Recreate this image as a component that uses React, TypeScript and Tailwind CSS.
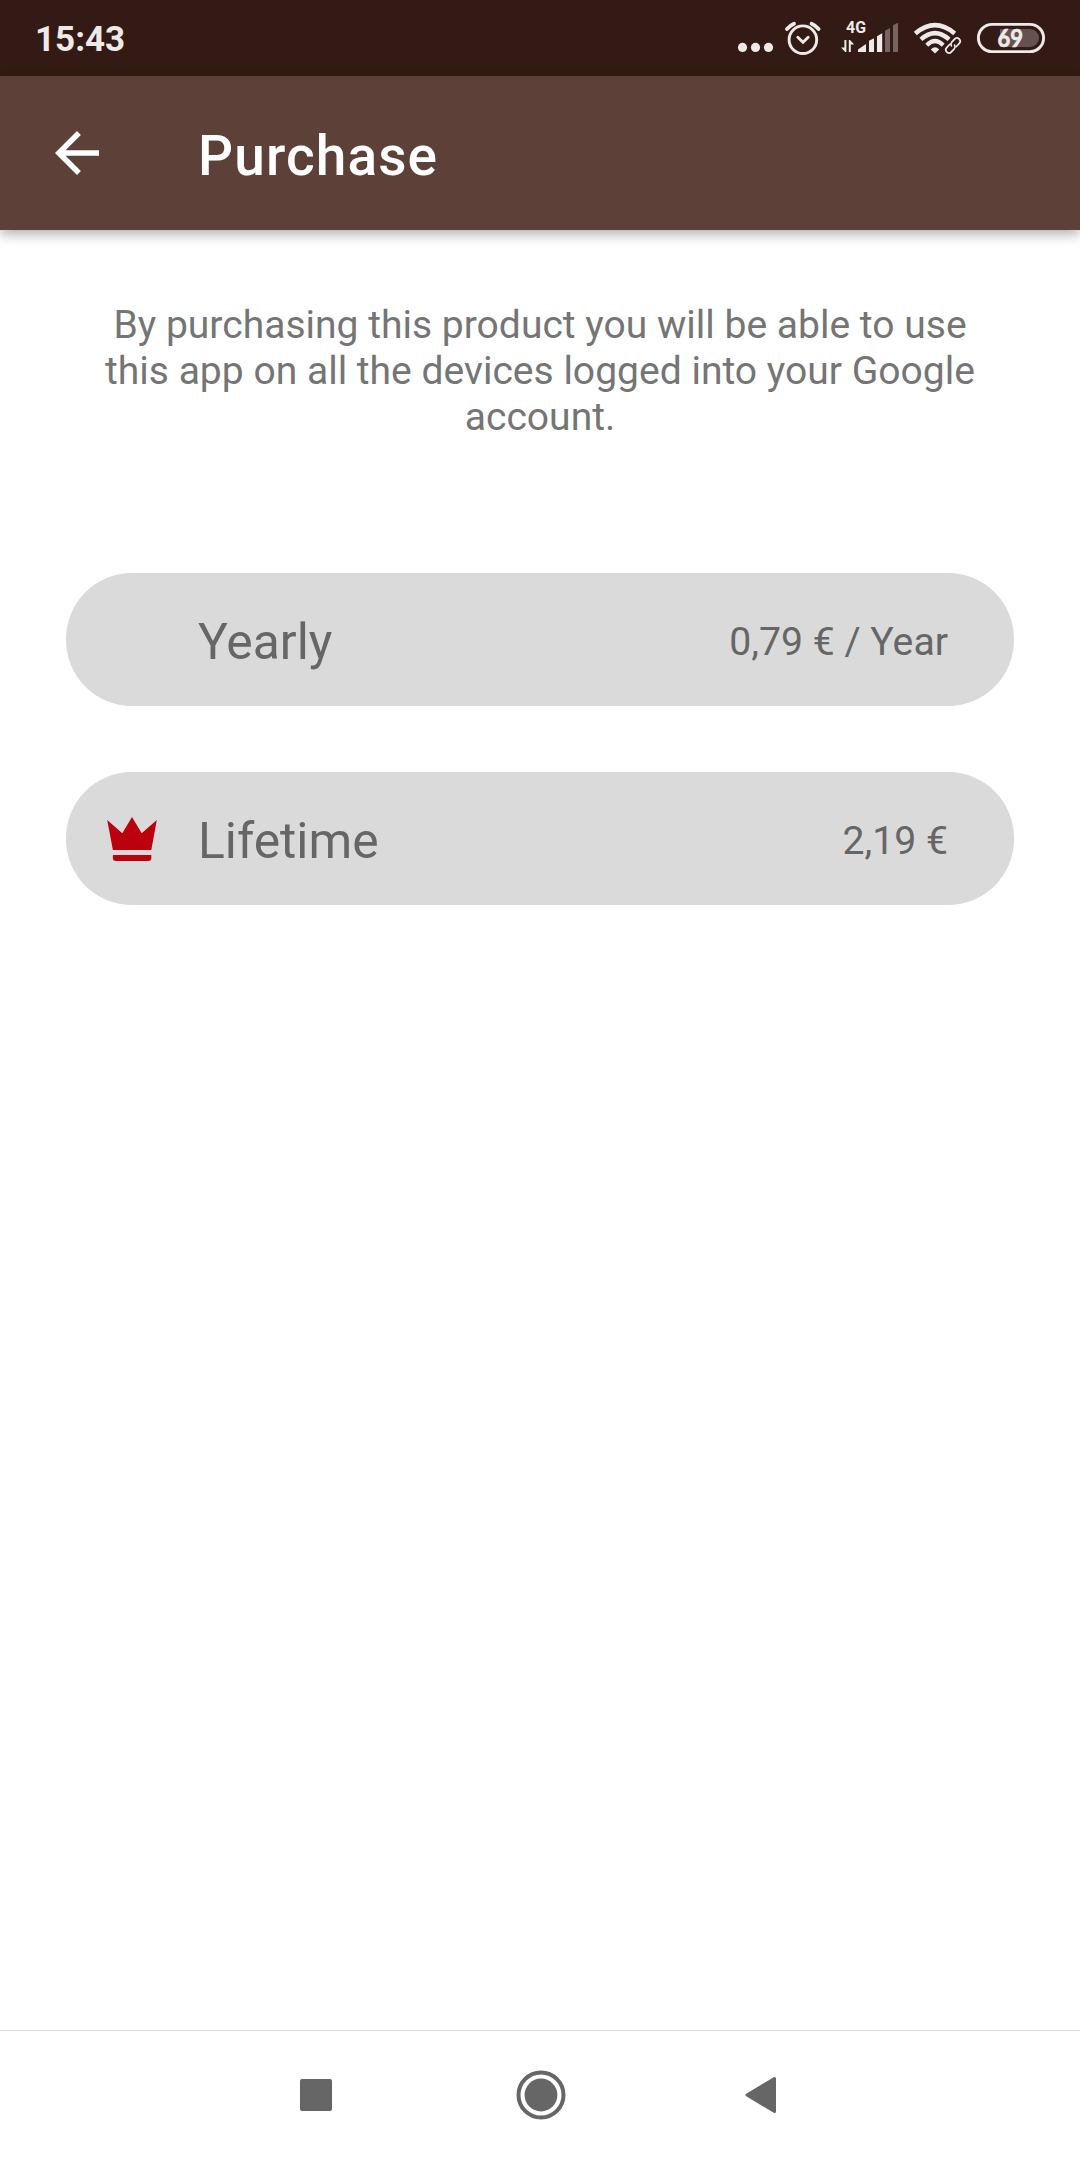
type PlanProps = {
    name: string;
    price: string;
    owned?: boolean;
};

function StatusIcons() {
    return (
        <svg width="312" height="76" viewBox="734 0 312 76" fill="none" stroke="#eeeae9">
            {/* more notifications */}
            <g fill="#eeeae9" stroke="none">
                <circle cx="742.5" cy="47.4" r="4.6" />
                <circle cx="755.5" cy="47.4" r="4.6" />
                <circle cx="768.5" cy="47.4" r="4.6" />
            </g>

            {/* alarm */}
            <circle cx="802.9" cy="39.7" r="13.8" strokeWidth="2.9" />
            <path d="M787 29Q790 25.5 794 23.8M818.6 29Q815.6 25.5 811.6 23.8" strokeWidth="3.8" strokeLinecap="round" />
            <path d="M797.8 37.2L803 42.2L808.2 37.2" strokeWidth="2.9" strokeLinecap="round" />

            {/* mobile network */}
            <text
                x="846"
                y="33"
                fill="#eeeae9"
                stroke="none"
                className="font-['Roboto',sans-serif] text-[16px] font-bold"
                textLength="20"
                lengthAdjust="spacingAndGlyphs"
            >
                4G
            </text>
            <g fill="#eeeae9" stroke="none">
                <path d="M844.4 40H846.4V52H845.2L841 47.6H844.4Z" />
                <path d="M850.8 52H848.8V40H850L854.2 44.6H850.8Z" />
                <path d="M858 52V49.5L866 44V52Z" />
                <path d="M869 52V40.8L874 38.2V52Z" />
                <path d="M877 52V36.3L882.2 33.3V52Z" />
                <path d="M885 52V30.8L890 28V52Z" opacity="0.36" />
                <path d="M893 52V25.3L898 22.7V52Z" opacity="0.36" />
            </g>

            {/* wifi */}
            <path d="M915.3 33.4Q935 16.8 954.7 33.4" strokeWidth="4.6" />
            <path d="M920.9 39.4Q935 26.8 949.1 39.4" strokeWidth="4.4" />
            <path d="M926.8 45.2Q935 37 943.2 45.2" strokeWidth="4.2" />
            <path d="M930.8 49.4Q935 45.3 939.2 49.4L935 53.4Z" fill="#eeeae9" stroke="none" />
            <g transform="rotate(-47 953 45.5)" strokeWidth="1.7" strokeLinecap="round">
                <path d="M951.4 42.3H947.2A3.2 3.2 0 0 0 947.2 48.7H951.4A3.2 3.2 0 0 0 954.4 46.4" />
                <path d="M954.6 48.7H958.8A3.2 3.2 0 0 0 958.8 42.3H954.6A3.2 3.2 0 0 0 951.6 44.6" />
            </g>

            {/* battery */}
            <rect x="978.4" y="24.4" width="65.2" height="27.2" rx="13.6" strokeWidth="2.9" />
            <path d="M1000 29H1030A9 9 0 0 1 1030 47H1000Z" fill="#eeeae9" opacity="0.27" stroke="none" />
            <text
                x="997.5"
                y="46.8"
                fill="#eeeae9"
                strokeWidth="0.7"
                className="font-['Lato',sans-serif] text-[24px] font-bold"
                textLength="25.5"
                lengthAdjust="spacingAndGlyphs"
            >
                69
            </text>
        </svg>
    );
}

function Plan({ name, price, owned }: PlanProps) {
    return (
        <button className="flex h-[133px] w-full items-center rounded-[66px] bg-[#dadada] pr-[66px] text-[#666666]">
            <span className="flex w-[132px] shrink-0 justify-center">
                {owned && (
                    <svg width="50" height="44" viewBox="0 0 50 44" fill="#bb000e">
                        <path d="M0.2 3L15.3 16.3L25 0L34.7 16.3L49.8 3L44.3 33H5.9Z" />
                        <path d="M5.9 38H44.3V41Q44.3 44 41.3 44H8.9Q5.9 44 5.9 41Z" />
                    </svg>
                )}
            </span>
            <span className="pt-[4px] text-[49.8px] leading-[50px]">{name}</span>
            <span className="ml-auto pt-[5px] text-[39.2px] leading-[39px]">{price}</span>
        </button>
    );
}

export default function App() {
    return (
        <div className="flex h-[2160px] w-[1080px] flex-col overflow-hidden bg-white font-['Roboto',sans-serif]">
            <div className="flex h-[76px] shrink-0 items-center justify-between bg-[#331a14] pr-[34px] pl-[35px]">
                <span className="pt-[2px] text-[35px] leading-none font-bold text-[#eeeae9]">15:43</span>
                <StatusIcons />
            </div>

            <header className="flex h-[154px] shrink-0 items-center bg-[#5d4037] pl-[44px] shadow-[0_4px_12px_rgba(0,0,0,0.32)]">
                <button aria-label="Back">
                    <svg width="66" height="66" viewBox="0 0 24 24" fill="#ffffff">
                        <path d="M20 11H7.83l5.59-5.59L12 4l-8 8 8 8 1.41-1.41L7.83 13H20v-2z" />
                    </svg>
                </button>
                <h1 className="ml-[88px] pt-[6px] text-[55px] leading-none font-medium tracking-[1.1px] text-white">
                    Purchase
                </h1>
            </header>

            <main className="flex grow flex-col px-[66px]">
                <p className="mt-[72px] px-[30px] text-center text-[39.05px] leading-[46px] text-[#757575]">
                    By purchasing this product you will be able to use this app on all the devices logged into your
                    Google account.
                </p>
                <div className="mt-[133px] flex flex-col gap-[66px]">
                    <Plan name="Yearly" price="0,79 € / Year" />
                    <Plan name="Lifetime" price="2,19 €" owned />
                </div>
            </main>

            <nav className="flex h-[130px] shrink-0 items-center justify-between border-t border-[#e0e0e0] pr-[304px] pb-px pl-[300px]">
                <span className="size-8 rounded-[2px] bg-[#666666]" />
                <svg className="ml-[4px]" width="50" height="50" viewBox="0 0 50 50" fill="#666666">
                    <circle cx="25" cy="25" r="22.5" fill="none" stroke="#666666" strokeWidth="4" />
                    <circle cx="25" cy="25" r="16.4" />
                </svg>
                <svg width="31" height="38" viewBox="0 0 31 38" fill="#666666">
                    <path
                        d="M2 19L29.5 2.5V35.5Z"
                        stroke="#666666"
                        strokeWidth="3"
                        strokeLinejoin="round"
                    />
                </svg>
            </nav>
        </div>
    );
}
